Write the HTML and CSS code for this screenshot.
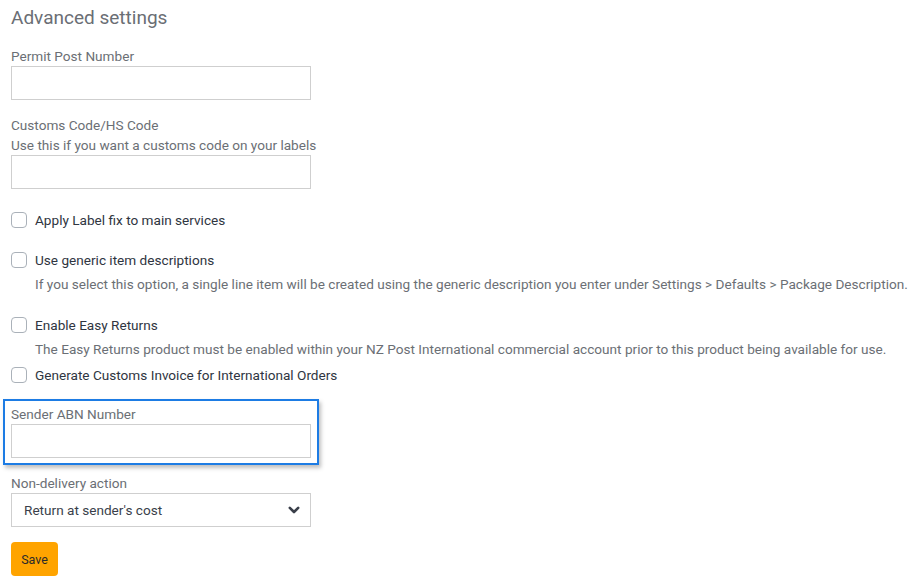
FILE: index.html
```html
<!DOCTYPE html>
<html lang="en">
<head>
<meta charset="utf-8">
<title>Advanced settings</title>
<link rel="stylesheet" href="styles.css">
</head>
<body>
<div class="page">
  <h2 class="title">Advanced settings</h2>

  <div class="field">
    <label class="label">Permit Post Number</label>
    <input class="input" type="text">
  </div>

  <div class="field field-gap">
    <label class="label">Customs Code/HS Code</label>
    <div class="label">Use this if you want a customs code on your labels</div>
    <input class="input" type="text">
  </div>

  <div class="check check-first">
    <span class="box"></span>
    <span class="check-label">Apply Label fix to main services</span>
  </div>

  <div class="check check-gap">
    <span class="box"></span>
    <span class="check-label">Use generic item descriptions</span>
  </div>
  <div class="help">If you select this option, a single line item will be created using the generic description you enter under Settings &gt; Defaults &gt; Package Description.</div>

  <div class="check check-gap2">
    <span class="box"></span>
    <span class="check-label">Enable Easy Returns</span>
  </div>
  <div class="help">The Easy Returns product must be enabled within your NZ Post International commercial account prior to this product being available for use.</div>

  <div class="check check-last">
    <span class="box"></span>
    <span class="check-label">Generate Customs Invoice for International Orders</span>
  </div>

  <div class="highlight">
    <label class="label">Sender ABN Number</label>
    <input class="input" type="text">
  </div>

  <div class="field field-after">
    <label class="label">Non-delivery action</label>
    <div class="select">
      <span>Return at sender's cost</span>
      <svg class="chev" width="12" height="8" viewBox="0 0 12 8"><path d="M1.8 1.8 L6 6 L10.2 1.8" fill="none" stroke="#3a3f4a" stroke-width="2.6" stroke-linecap="round" stroke-linejoin="round"/></svg>
    </div>
  </div>

  <button class="save">Save</button>
</div>
</body>
</html>
```
FILE: styles.css
```css
* { box-sizing: border-box; }
html, body { margin: 0; padding: 0; background: #fff; }
body {
  font-family: Roboto, "Noto Sans", Arial, sans-serif;
  font-size: 13.6px;
  color: #666;
}
.page {
  padding: 6px 11px 0 11px;
  display: flex;
  flex-direction: column;
  align-items: flex-start;
}
.title {
  margin: 0;
  font-size: 19px;
  font-weight: 400;
  color: #6a6e74;
  line-height: 24px;
}
.field { display: flex; flex-direction: column; }
.title + .field { margin-top: 16px; }
.label {
  display: block;
  font-size: 13.6px;
  line-height: 20px;
  color: #6b6f75;
}
.input {
  width: 300px;
  height: 34px;
  border: 1px solid #cfcfcf;
  border-radius: 0;
  background: #fff;
  margin: 0;
  padding: 0 12px;
  font: inherit;
}
.field-gap { margin-top: 15px; }
.check {
  display: flex;
  align-items: center;
  gap: 8px;
  height: 20px;
}
.check-first { margin-top: 21px; }
.check-gap { margin-top: 20px; }
.check-gap2 { margin-top: 21px; }
.check-last { margin-top: 6px; }
.box {
  width: 16px;
  height: 16px;
  border: 1px solid #aab1b9;
  border-radius: 4px;
  background: #fff;
  flex: none;
}
.check-label {
  color: #2f3541;
  font-size: 13.6px;
}
.help {
  margin-left: 24px;
  margin-top: 4px;
  color: #6b6f75;
  font-size: 13.6px;
  line-height: 20px;
}
.highlight {
  margin: 14px 0 0 -8px;
  padding: 3px 6px 5px 6px;
  border: 2px solid #1d7ce4;
  box-shadow: 2px 3px 4px rgba(0,0,0,0.25);
  display: flex;
  flex-direction: column;
}
.field-after { margin-top: 8px; }
.select {
  width: 300px;
  height: 34px;
  border: 1px solid #cfcfcf;
  display: flex;
  align-items: center;
  justify-content: space-between;
  padding: 0 10px 0 12px;
  color: #3a3f4a;
  font-size: 13.6px;
}
.chev { display: block; }
.save {
  margin-top: 15px;
  width: 47px;
  height: 34px;
  border: none;
  border-radius: 4px;
  background: #ffa400;
  color: #2a2a2a;
  font: inherit;
  font-size: 12.5px;
  padding: 0;
  cursor: pointer;
}
```
